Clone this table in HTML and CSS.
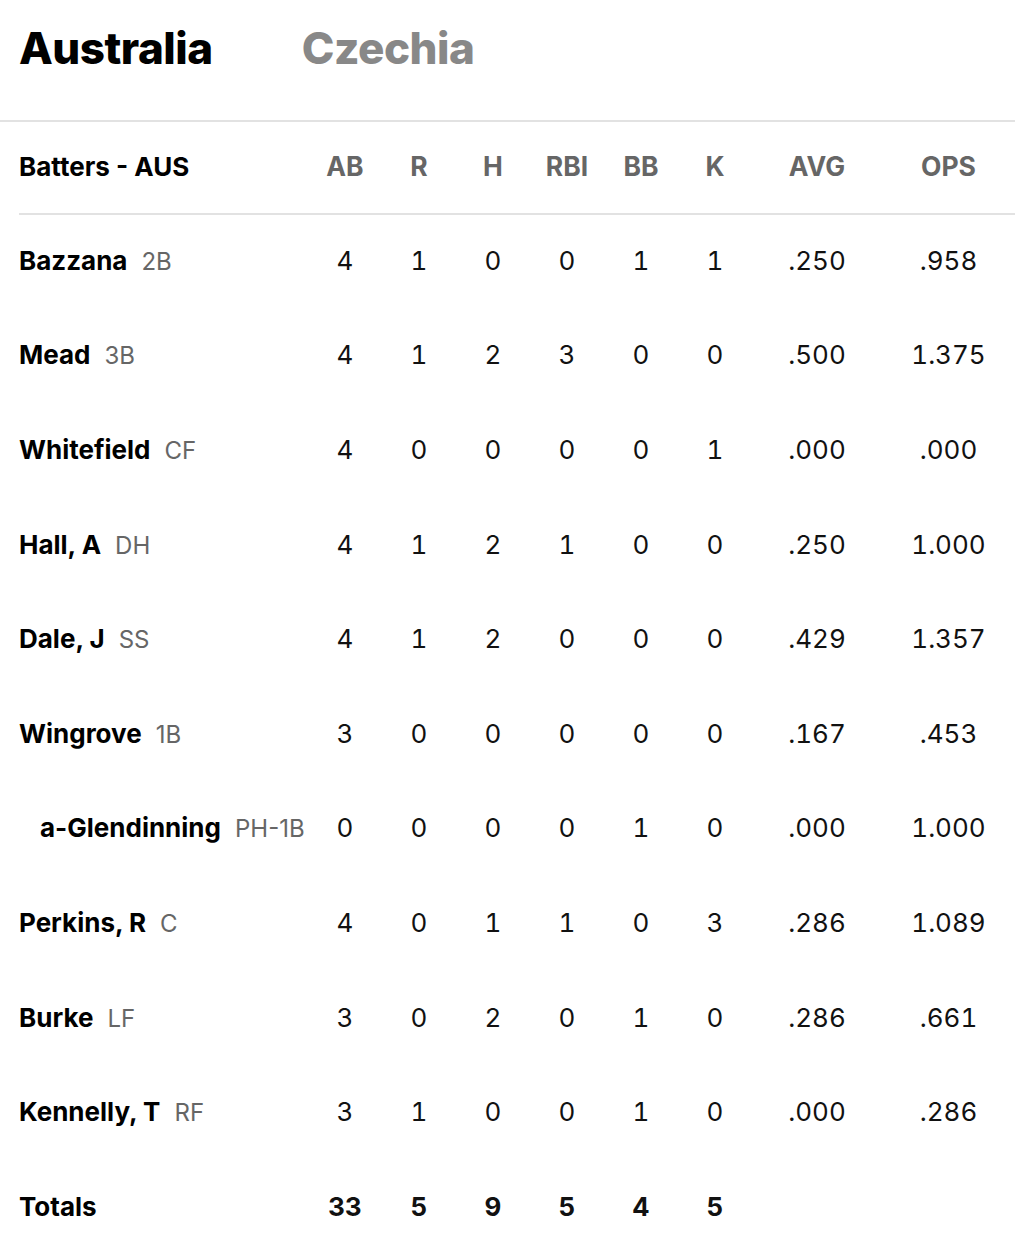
FILE: index.html
```html
<!DOCTYPE html>
<html lang="en">
<head>
<meta charset="utf-8">
<title>Box score</title>
<link rel="stylesheet" href="styles.css">
</head>
<body>
<div class="tabs">
  <div class="tab active">Australia</div>
  <div class="tab">Czechia</div>
</div>
<div class="table">
  <div class="row head">
    <div class="name">Batters - AUS</div>
    <div>AB</div><div>R</div><div>H</div><div>RBI</div><div>BB</div><div>K</div><div>AVG</div><div>OPS</div>
  </div>
  <div class="row"><div class="name">Bazzana<span class="pos">2B</span></div><div>4</div><div>1</div><div>0</div><div>0</div><div>1</div><div>1</div><div>.250</div><div>.958</div></div>
  <div class="row"><div class="name">Mead<span class="pos">3B</span></div><div>4</div><div>1</div><div>2</div><div>3</div><div>0</div><div>0</div><div>.500</div><div>1.375</div></div>
  <div class="row"><div class="name">Whitefield<span class="pos">CF</span></div><div>4</div><div>0</div><div>0</div><div>0</div><div>0</div><div>1</div><div>.000</div><div>.000</div></div>
  <div class="row"><div class="name">Hall, A<span class="pos">DH</span></div><div>4</div><div>1</div><div>2</div><div>1</div><div>0</div><div>0</div><div>.250</div><div>1.000</div></div>
  <div class="row"><div class="name">Dale, J<span class="pos">SS</span></div><div>4</div><div>1</div><div>2</div><div>0</div><div>0</div><div>0</div><div>.429</div><div>1.357</div></div>
  <div class="row"><div class="name">Wingrove<span class="pos">1B</span></div><div>3</div><div>0</div><div>0</div><div>0</div><div>0</div><div>0</div><div>.167</div><div>.453</div></div>
  <div class="row"><div class="name sub">a-Glendinning<span class="pos">PH-1B</span></div><div>0</div><div>0</div><div>0</div><div>0</div><div>1</div><div>0</div><div>.000</div><div>1.000</div></div>
  <div class="row"><div class="name">Perkins, R<span class="pos">C</span></div><div>4</div><div>0</div><div>1</div><div>1</div><div>0</div><div>3</div><div>.286</div><div>1.089</div></div>
  <div class="row"><div class="name">Burke<span class="pos">LF</span></div><div>3</div><div>0</div><div>2</div><div>0</div><div>1</div><div>0</div><div>.286</div><div>.661</div></div>
  <div class="row"><div class="name">Kennelly, T<span class="pos">RF</span></div><div>3</div><div>1</div><div>0</div><div>0</div><div>1</div><div>0</div><div>.000</div><div>.286</div></div>
  <div class="row totals"><div class="name">Totals</div><div>33</div><div>5</div><div>9</div><div>5</div><div>4</div><div>5</div><div></div><div></div></div>
</div>
</body>
</html>
```
FILE: styles.css
```css
html, body {
  margin: 0;
  padding: 0;
  background: #fff;
}
body {
  font-family: "Inter", "Liberation Sans", sans-serif;
  color: #111;
  width: 1015px;
}
.tabs {
  display: flex;
  gap: 89px;
  align-items: center;
  padding: 0 0 25px 19px;
  border-bottom: 2px solid #e2e2e2;
  box-sizing: border-box;
  height: 122px;
}
.tab {
  font-size: 44px;
  font-weight: 800;
  color: #888;
  letter-spacing: -0.5px;
}
.tab.active {
  color: #000;
}
.table {
  margin-left: 19px;
}
.row {
  display: grid;
  grid-template-columns: 289px 74px 74px 74px 74px 74px 74px 130px 133px;
  align-items: center;
  height: 94.6px;
  box-sizing: border-box;
  padding-bottom: 4px;
  font-size: 26px;
  text-align: center;
  color: #111;
}
.row > div {
  font-variant-numeric: tabular-nums;
}
.row.head {
  height: 93px;
  padding-bottom: 3px;
  border-bottom: 2px solid #e2e2e2;
  font-weight: 700;
  color: #666;
  font-size: 26.5px;
}
.row.head .name {
  color: #000;
  font-size: 26px;
}
.row > .name {
  text-align: left;
  font-weight: 700;
  color: #000;
  display: flex;
  align-items: baseline;
  gap: 14px;
  white-space: nowrap;
  font-size: 26px;
  font-variant-numeric: normal;
}
.name.sub {
  padding-left: 21px;
}
.pos {
  font-weight: 400;
  color: #666;
  font-size: 24px;
}
.totals {
  font-weight: 700;
}
```
